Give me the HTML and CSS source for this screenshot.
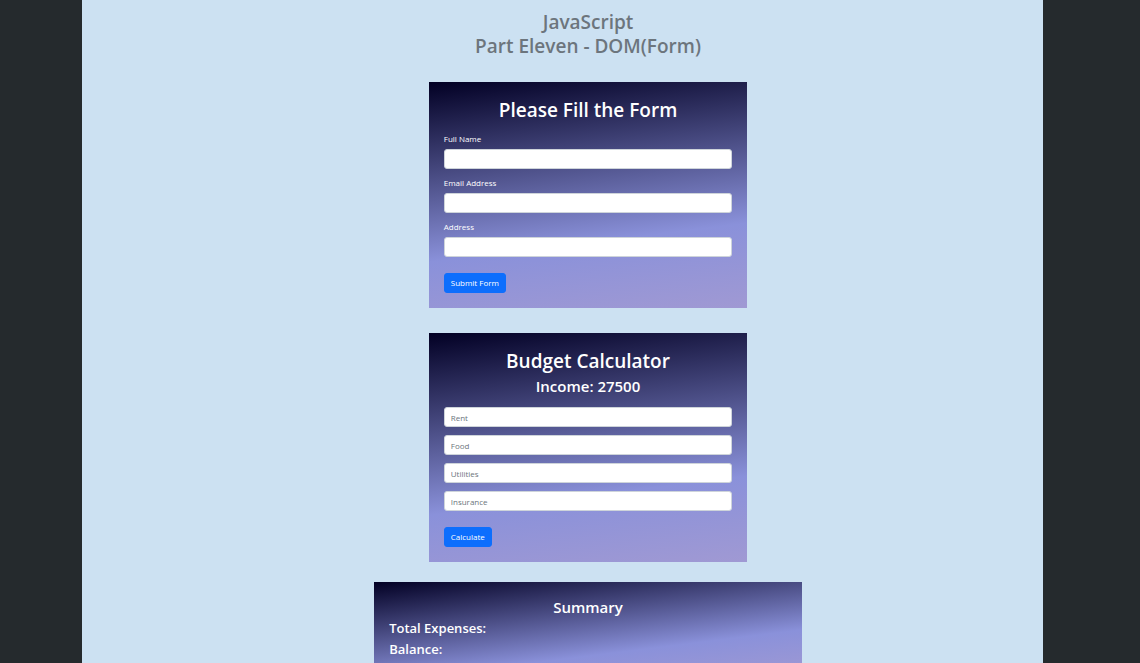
FILE: index.html
```html
<!DOCTYPE html>
<html lang="en">
<head>
<meta charset="utf-8">
<meta name="viewport" content="width=device-width, initial-scale=1">
<title>JavaScript - DOM(Form)</title>
<link rel="stylesheet" href="styles.css">
</head>
<body>
<main class="page">
  <h1 class="page-title">JavaScript<br>Part Eleven - DOM(Form)</h1>

  <form class="card">
    <h2 class="card-title">Please Fill the Form</h2>
    <div class="fields">
      <div class="field">
        <label for="full-name">Full Name</label>
        <input class="control" type="text" id="full-name">
      </div>
      <div class="field">
        <label for="email">Email Address</label>
        <input class="control" type="email" id="email">
      </div>
      <div class="field">
        <label for="address">Address</label>
        <input class="control" type="text" id="address">
      </div>
    </div>
    <button class="btn" type="button">Submit Form</button>
  </form>

  <form class="card budget">
    <h2 class="card-title">Budget Calculator</h2>
    <h3 class="income">Income: 27500</h3>
    <div class="fields">
      <input class="control" type="text" placeholder="Rent" aria-label="Rent">
      <input class="control" type="text" placeholder="Food" aria-label="Food">
      <input class="control" type="text" placeholder="Utilities" aria-label="Utilities">
      <input class="control" type="text" placeholder="Insurance" aria-label="Insurance">
    </div>
    <button class="btn" type="button">Calculate</button>
  </form>

  <section class="card summary">
    <h3 class="summary-title">Summary</h3>
    <h4 class="summary-line">Total Expenses:</h4>
    <h4 class="summary-line">Balance:</h4>
  </section>
</main>
</body>
</html>
```
FILE: styles.css
```css
* {
  box-sizing: border-box;
}

body {
  margin: 0;
  padding-right: 15px;
  min-height: 100vh;
  background: #252a2d;
  color: #fff;
  font-family: "Segoe UI", "Open Sans", "Noto Sans", sans-serif;
  font-size: 8px;
  line-height: 12px;
}

h1, h2, h3, h4 {
  margin: 0;
  font-weight: 600;
  text-align: center;
}

.page {
  display: flex;
  flex-direction: column;
  align-items: center;
  max-width: 961px;
  min-height: 100vh;
  margin: 0 auto;
  padding: 10px 0 24px 51px;
  background: #cce1f2;
}

.page-title {
  margin-bottom: 24px;
  color: #6c757d;
  font-size: 19px;
  line-height: 24px;
}

.card {
  width: 35%;
  min-width: 240px;
  margin-bottom: 25px;
  padding: 16px 15px 15px;
  background: linear-gradient(173deg, #020024, #8a91da 68%, #a099d3);
}

.card-title {
  font-size: 19px;
  line-height: 24px;
}

.fields {
  display: flex;
  flex-direction: column;
  gap: 8px;
  margin: 11px 0 16px;
}

.field {
  display: flex;
  flex-direction: column;
  gap: 4px;
}

.control {
  width: 100%;
  height: 20px;
  padding: 3px 6px;
  border: 1px solid #ced4da;
  border-radius: 3px;
  background: #fff;
  color: #212529;
  font: inherit;
}

.control::placeholder {
  color: #6c757d;
  opacity: 1;
}

.btn {
  display: block;
  height: 20px;
  padding: 3px 6px;
  border: 1px solid #0d6efd;
  border-radius: 3px;
  background: #0d6efd;
  color: #fff;
  font: inherit;
}

.budget {
  margin-bottom: 20px;
}

.income,
.summary-title {
  font-size: 15px;
  line-height: 18px;
}

.income {
  margin: 4px 0 12px;
}

.income + .fields {
  margin-top: 0;
}

.summary {
  width: 47%;
}

.summary-title {
  margin-bottom: 4px;
}

.summary-line {
  margin-bottom: 4px;
  font-size: 13px;
  line-height: 17px;
  text-align: left;
}
```
